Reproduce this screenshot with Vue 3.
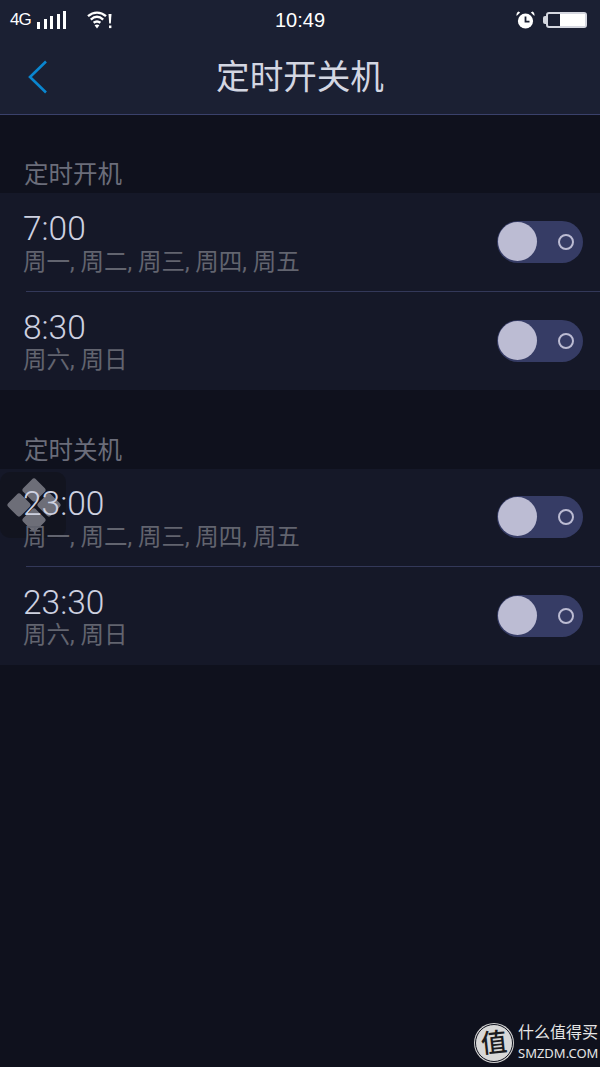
<script setup>
const sections = [
  { title: '定时开机', rows: [
    { time: '7:00', days: '周一, 周二, 周三, 周四, 周五' },
    { time: '8:30', days: '周六, 周日' },
  ] },
  { title: '定时关机', rows: [
    { time: '23:00', days: '周一, 周二, 周三, 周四, 周五' },
    { time: '23:30', days: '周六, 周日' },
  ] },
]
const bars = [7, 10, 13, 15, 18]
</script>

<template>
  <div class="page">
    <header class="header">
      <div class="status">
        <div class="status-left">
          <span class="net">4G</span>
          <span class="bars"><i v-for="h in bars" :key="h" :style="{ height: h + 'px' }"></i></span>
          <svg class="wifi" width="25" height="18" viewBox="0 0 25 18">
            <g fill="none" stroke="#fff" stroke-width="2.4">
              <path d="M1 5.200C6.500 .4 13.500 .4 19 5.200" />
              <path d="M3.800 8.600C7.800 5 12.200 5 16.200 8.600" />
              <path d="M6.600 11.800C9 10 11 10 13.400 11.800" />
            </g>
            <path d="M7.600 14.200C9 13.200 11 13.200 12.400 14.200L10 17.600Z" fill="#fff" />
            <path d="M21.500 3H24.500L23.800 12.500H22.200Z" fill="#fff" />
            <rect x="22" y="14.500" width="2.400" height="2.600" fill="#fff" />
          </svg>
        </div>
        <span class="clock">10:49</span>
        <div class="status-right">
          <svg width="19" height="18" viewBox="0 0 19 18">
            <circle cx="9.500" cy="10" r="7.600" fill="#fff" />
            <path d="M.6 5 4.200 1.400 2.400 .6C1 1.200 .2 3 .6 5ZM18.400 5 14.800 1.400 16.600 .6C18 1.200 18.800 3 18.400 5Z" fill="#fff" />
            <path d="M9.500 5.500V10.700H13.500" fill="none" stroke="#1b2033" stroke-width="1.800" />
          </svg>
          <div class="battery"><span class="battery-tip"></span><span class="battery-fill"></span></div>
        </div>
      </div>
      <div class="nav">
        <svg class="back" width="20" height="34" viewBox="0 0 20 34">
          <path d="M18 1.500 2 17 18 32.500" fill="none" stroke="#0a86d0" stroke-width="2.600" />
        </svg>
        <h1 class="title">定时开关机</h1>
      </div>
    </header>

    <section v-for="s in sections" :key="s.title" class="section">
      <div class="section-title">{{ s.title }}</div>
      <div class="list">
        <div v-for="r in s.rows" :key="r.time" class="row">
          <div class="text">
            <div class="time">{{ r.time }}</div>
            <div class="days">{{ r.days }}</div>
          </div>
          <div class="switch"><span class="knob"></span><span class="ring"></span></div>
        </div>
      </div>
    </section>

    <div class="float">
      <i class="d d1"></i><i class="d d2"></i><i class="d d3"></i><i class="d d4"></i>
    </div>

    <div class="mark">
      <div class="badge"><span>值</span></div>
      <div class="mark-text">
        <div class="mark-cn">什么值得买</div>
        <div class="mark-en">SMZDM.COM</div>
      </div>
    </div>
  </div>
</template>

<style scoped>
.page {
  position: relative;
  width: 600px;
  height: 1067px;
  overflow: hidden;
  background: #0f111d;
  font-family: Roboto, "Noto Sans CJK SC", sans-serif;
}
.header {
  height: 114px;
  background: #1b2033;
  border-bottom: 1px solid #3a416b;
}
.status {
  height: 40px;
  display: flex;
  align-items: center;
  position: relative;
  padding: 0 13px 0 10px;
  color: #fff;
}
.status-left {
  display: flex;
  align-items: flex-end;
  height: 18px;
}
.net {
  font: 17px/18px "Liberation Sans", sans-serif;
  width: 27px;
  letter-spacing: -1px;
}
.bars {
  display: flex;
  align-items: flex-end;
  gap: 3.500px;
  height: 18px;
}
.bars i {
  display: block;
  width: 3px;
  background: #fff;
}
.wifi {
  margin-left: 21px;
}
.clock {
  position: absolute;
  left: 275px;
  top: 8px;
  font: 20px/24px "Liberation Sans", sans-serif;
}
.status-right {
  margin-left: auto;
  display: flex;
  align-items: center;
  gap: 11px;
}
.battery {
  position: relative;
  width: 37px;
  height: 12px;
  border: 2px solid #d5d7e0;
  border-radius: 3px;
  background: #1b2033;
  display: flex;
  justify-content: flex-end;
}
.battery-fill {
  width: 25px;
  height: 12px;
  background: #fff;
}
.battery-tip {
  position: absolute;
  left: -5px;
  top: 2px;
  width: 3px;
  height: 8px;
  background: #d5d7e0;
  border-radius: 2px 0 0 2px;
}
.nav {
  height: 74px;
  position: relative;
  display: flex;
  align-items: center;
  justify-content: center;
}
.back {
  position: absolute;
  left: 28px;
  top: 20px;
}
.title {
  margin: 0;
  font-size: 33.600px;
  font-weight: 400;
  line-height: 74px;
  color: #d3d6e2;
  transform: translateY(1px);
}
.section-title {
  height: 78px;
  padding-left: 24px;
  box-sizing: border-box;
  padding-top: 43px;
  font-size: 24.500px;
  line-height: 34px;
  color: #6b6d7a;
}
.section + .section .section-title {
  height: 79px;
  padding-top: 44px;
}
.list {
  background: #151828;
}
.row {
  height: 98px;
  margin-left: 26px;
  padding-right: 17px;
  display: flex;
  align-items: center;
  justify-content: space-between;
}
.row + .row {
  height: 99px;
  border-top: 1px solid #333859;
  box-sizing: border-box;
}
.section + .section .row:first-child {
  height: 96px;
  padding-bottom: 1px;
}
.text {
  position: relative;
  z-index: 2;
  margin-left: -3px;
  padding-top: 3px;
}
.time {
  font-size: 33.500px;
  font-weight: 300;
  line-height: 34px;
  margin-bottom: 2px;
  color: #ced1e0;
}
.row + .row .time {
  margin-bottom: 1px;
}
.days {
  font-size: 23.500px;
  line-height: 28px;
  color: #62646f;
}
.switch {
  position: relative;
  width: 86px;
  height: 42px;
  border-radius: 21px;
  background: #363c65;
  flex: none;
}
.knob {
  position: absolute;
  left: 1px;
  top: 1px;
  width: 39px;
  height: 39px;
  border-radius: 50%;
  background: #bcbcd3;
}
.ring {
  position: absolute;
  left: 61px;
  top: 13px;
  width: 12px;
  height: 12px;
  border: 2px solid #bcbcd3;
  border-radius: 50%;
}
.float {
  position: absolute;
  z-index: 1;
  left: 0;
  top: 472px;
  width: 66px;
  height: 66px;
  border-radius: 10px;
  background: #12141f;
}
.d {
  position: absolute;
  width: 18px;
  height: 18px;
  border-radius: 3px;
  background: #6d6e78;
  transform: rotate(45deg);
}
.d1 { left: 24.500px; top: 9px; }
.d2 { left: 9.500px; top: 24px; }
.d3 { left: 39.500px; top: 24px; }
.d4 { left: 24.500px; top: 39px; }
.mark {
  position: absolute;
  left: 475px;
  top: 1023px;
  display: flex;
  align-items: center;
  gap: 5px;
  color: #e6e6e6;
}
.badge {
  width: 36px;
  height: 36px;
  border-radius: 50%;
  background: #d8d8d8;
  border: 1px solid #0f111d;
  box-shadow: 0 0 0 1px #cfcfcf;
  display: flex;
  align-items: center;
  justify-content: center;
  color: #1c1c20;
  font-size: 26px;
  line-height: 36px;
  font-weight: 500;
}
.badge span {
  transform: rotate(-6deg);
}
.mark-cn {
  font-size: 16px;
  line-height: 20px;
}
.mark-en {
  font: 13px/18px "Noto Sans", sans-serif;
  margin-top: 1px;
}
</style>
